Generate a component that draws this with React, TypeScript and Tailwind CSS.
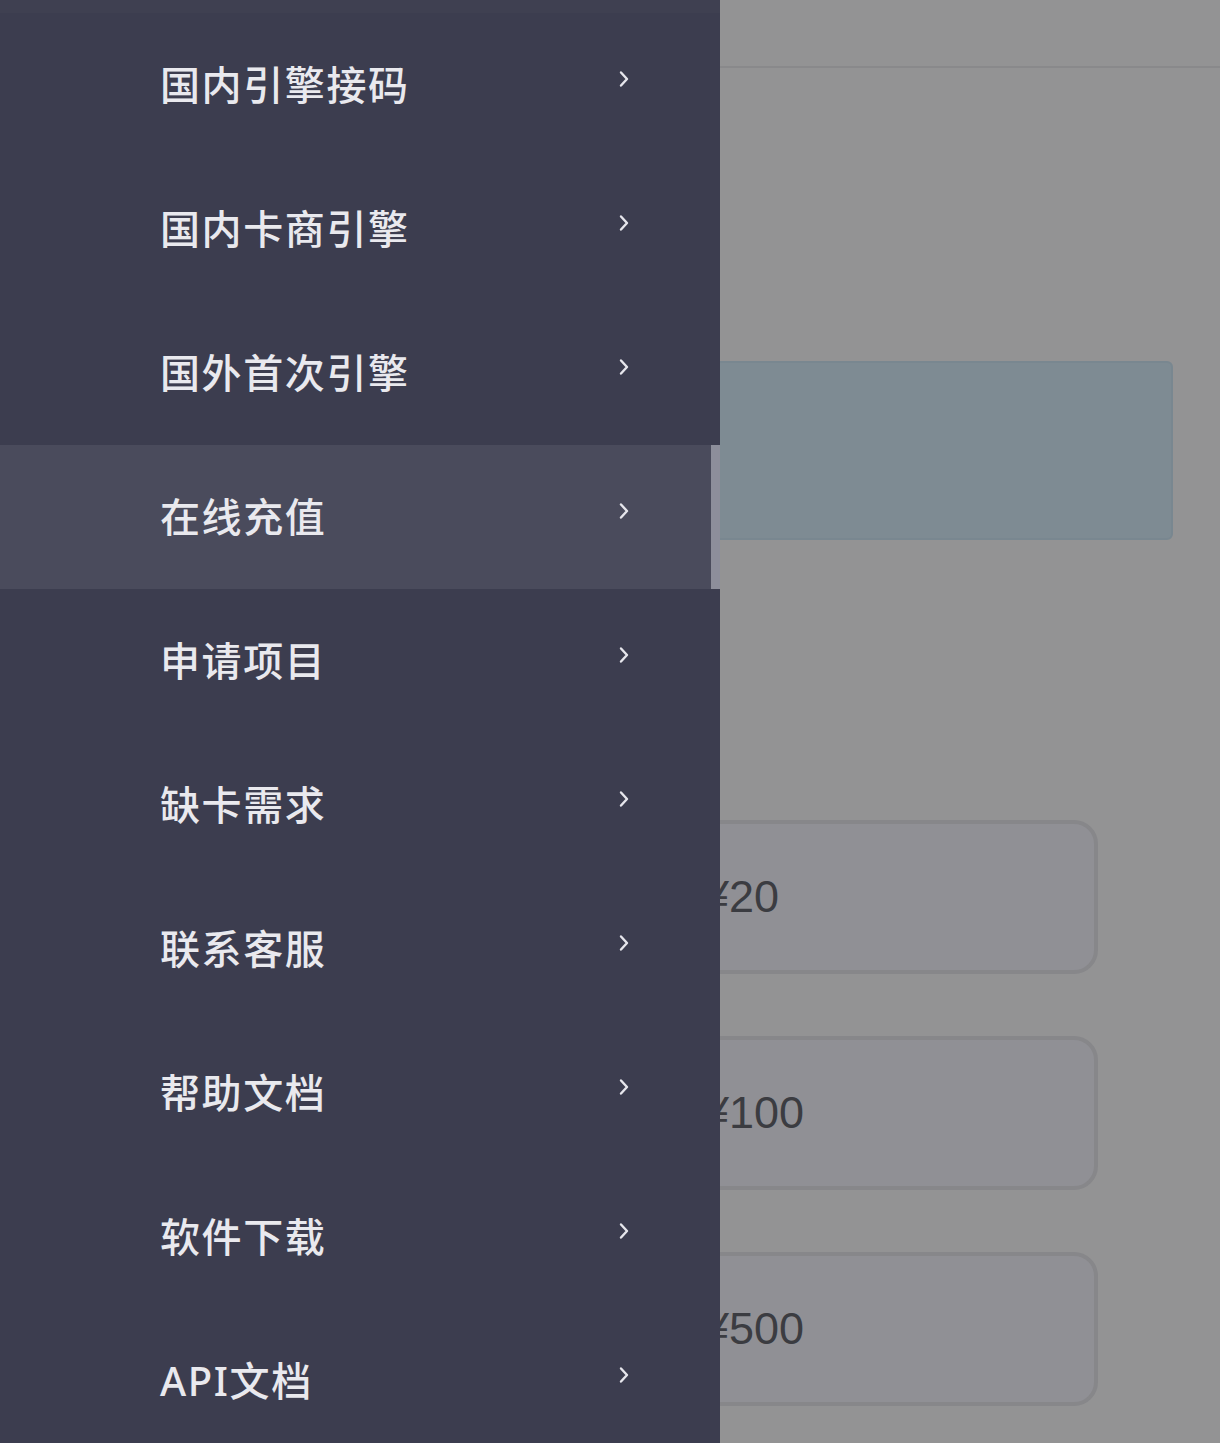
const menu = [
  '国内引擎接码',
  '国内卡商引擎',
  '国外首次引擎',
  '在线充值',
  '申请项目',
  '缺卡需求',
  '联系客服',
  '帮助文档',
  '软件下载',
  'API文档',
];

const amounts = ['¥20', '¥100', '¥500'];

function Chevron() {
  return (
    <svg width="12" height="18" viewBox="0 0 12 18" className="shrink-0 -mt-[12px]">
      <polyline
        points="3,2.5 9,9 3,15.5"
        fill="none"
        stroke="#e6e6ec"
        strokeWidth="2.4"
        strokeLinecap="round"
        strokeLinejoin="round"
      />
    </svg>
  );
}

export default function App() {
  return (
    <div
      className="relative w-[1220px] h-[1443px] overflow-hidden bg-[#939394]"
      style={{ fontFamily: '"Noto Sans", "Noto Sans CJK SC", sans-serif' }}
    >
      {/* page behind the drawer (dimmed) */}
      <div className="flex flex-col">
        <div className="h-[68px] border-b-2 border-[#89898b]" />
        <div className="ml-[600px] mr-[47px] mt-[293px] h-[179px] rounded-md border-2 border-[#798790] bg-[#7e8b93]" />
        <div className="ml-[620px] mr-[122px] mt-[280px] flex flex-col gap-[62px]">
          {amounts.map((a) => (
            <div
              key={a}
              className="h-[154px] rounded-[24px] border-[4px] border-[#87878a] bg-[#909095] flex items-center pl-[80px] text-[45px] text-[#3b3c41]"
              style={{ fontFamily: '"Liberation Sans", "Noto Sans CJK SC", sans-serif' }}
            >
              {a}
            </div>
          ))}
        </div>
      </div>

      {/* drawer */}
      <div className="absolute left-0 top-0 h-full w-[720px] bg-[#3c3d4f] flex flex-col">
        <div className="h-[13px] shrink-0 bg-[#3f4051]" />
        {menu.map((m, i) => {
          const active = i === 3;
          return (
            <div
              key={m}
              className={
                'relative h-[144px] shrink-0 flex items-center justify-between pl-[160px] pr-[90px] ' +
                (active ? 'bg-[#4a4b5c]' : '')
              }
            >
              <span className="text-[40px] tracking-[1.6px] text-[#e9e9ee] font-medium leading-none">{m}</span>
              <Chevron />
              {active && <div className="absolute right-0 top-0 h-full w-[9px] bg-[#8d8e9b]" />}
            </div>
          );
        })}
      </div>
    </div>
  );
}
